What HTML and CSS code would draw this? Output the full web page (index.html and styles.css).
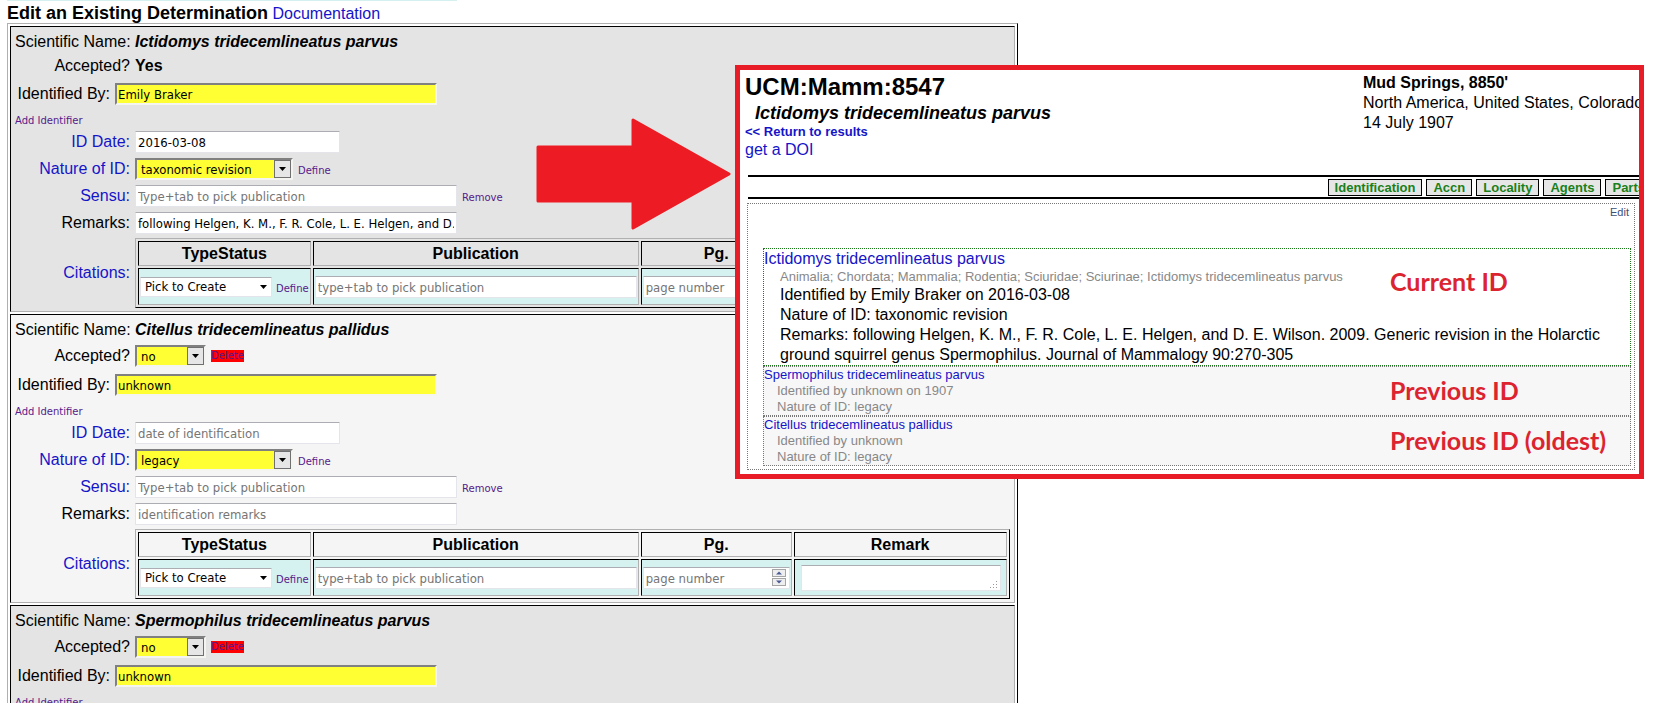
FILE: index.html
```html
<!DOCTYPE html>
<html lang="en">
<head>
<meta charset="utf-8">
<title>Edit an Existing Determination</title>
<link rel="stylesheet" href="styles.css">
</head>
<body>
<main class="editor">
  <div class="strip"></div>
  <header class="heading"><h1>Edit an Existing Determination</h1> <a href="#">Documentation</a></header>
  <div class="sheet">
    <section class="det det-dark">
      <div class="row row-name"><span class="lab">Scientific Name:</span><b><i>Ictidomys tridecemlineatus parvus</i></b></div>
      <div class="row row-acc"><span class="lab">Accepted?</span><b>Yes</b></div>
      <div class="row row-by"><label class="lab lab-by" for="by1">Identified By:</label><input class="box wide need" id="by1" value="Emily Braker"></div>
      <div class="row-add"><a class="small" href="#">Add Identifier</a></div>
      <div class="row"><label class="lab link" for="date1">ID Date:</label><input class="box mid" id="date1" value="2016-03-08"></div>
      <div class="row"><label class="lab link" for="nat1">Nature of ID:</label><span class="pick pick-nature"><select class="box need" id="nat1"><option>taxonomic revision</option></select><svg class="drop" viewBox="0 0 17 18"><rect class="btn" x=".5" y=".5" width="16" height="17"/><path d="M5 7h7l-3.500 4z"/></svg></span><a class="small" href="#">Define</a></div>
      <div class="row"><label class="lab link" for="sen1">Sensu:</label><input class="box wide" id="sen1" placeholder="Type+tab to pick publication"><a class="small" href="#">Remove</a></div>
      <div class="row"><label class="lab" for="rem1">Remarks:</label><input class="box wide" id="rem1" value="following Helgen, K. M., F. R. Cole, L. E. Helgen, and D."></div>
      <div class="row row-cite"><span class="lab link">Citations:</span>
        <table class="cites">
          <thead><tr><th>TypeStatus</th><th>Publication</th><th>Pg.</th><th>Remark</th></tr></thead>
          <tbody><tr>
            <td><div class="cell"><span class="pick pick-type"><select class="box" aria-label="Type status"><option>Pick to Create</option></select><svg class="drop plain" viewBox="0 0 17 18"><path d="M5 7h7l-3.500 4z"/></svg></span><a class="small" href="#">Define</a></div></td>
            <td><input class="box pub" aria-label="Publication" placeholder="type+tab to pick publication"></td>
            <td><input class="box page" aria-label="Page" placeholder="page number"></td>
            <td><textarea class="box note" aria-label="Remark"></textarea></td>
          </tr></tbody>
        </table>
      </div>
    </section>

    <section class="det det-light">
      <div class="row row-name"><span class="lab">Scientific Name:</span><b><i>Citellus tridecemlineatus pallidus</i></b></div>
      <div class="row row-acc row-choose"><label class="lab" for="acc2">Accepted?</label><span class="pick pick-acc"><select class="box need" id="acc2"><option>no</option></select><svg class="drop" viewBox="0 0 17 18"><rect class="btn" x=".5" y=".5" width="16" height="17"/><path d="M5 7h7l-3.500 4z"/></svg></span><a class="small delete" href="#">Delete</a></div>
      <div class="row row-by"><label class="lab lab-by" for="by2">Identified By:</label><input class="box wide need" id="by2" value="unknown"></div>
      <div class="row-add"><a class="small" href="#">Add Identifier</a></div>
      <div class="row"><label class="lab link" for="date2">ID Date:</label><input class="box mid" id="date2" placeholder="date of identification"></div>
      <div class="row"><label class="lab link" for="nat2">Nature of ID:</label><span class="pick pick-nature"><select class="box need" id="nat2"><option>legacy</option></select><svg class="drop" viewBox="0 0 17 18"><rect class="btn" x=".5" y=".5" width="16" height="17"/><path d="M5 7h7l-3.500 4z"/></svg></span><a class="small" href="#">Define</a></div>
      <div class="row"><label class="lab link" for="sen2">Sensu:</label><input class="box wide" id="sen2" placeholder="Type+tab to pick publication"><a class="small" href="#">Remove</a></div>
      <div class="row"><label class="lab" for="rem2">Remarks:</label><input class="box wide" id="rem2" placeholder="identification remarks"></div>
      <div class="row row-cite"><span class="lab link">Citations:</span>
        <table class="cites">
          <thead><tr><th>TypeStatus</th><th>Publication</th><th>Pg.</th><th>Remark</th></tr></thead>
          <tbody><tr>
            <td><div class="cell"><span class="pick pick-type"><select class="box" aria-label="Type status"><option>Pick to Create</option></select><svg class="drop plain" viewBox="0 0 17 18"><path d="M5 7h7l-3.500 4z"/></svg></span><a class="small" href="#">Define</a></div></td>
            <td><input class="box pub" aria-label="Publication" placeholder="type+tab to pick publication"></td>
            <td><span class="pick"><input class="box page" aria-label="Page" placeholder="page number"><svg class="spin" viewBox="0 0 14 17"><rect class="half" x=".5" y=".5" width="13" height="7"/><rect class="half" x=".5" y="9.500" width="13" height="7"/><path d="M4 5.500h6L7 2.500zM4 11.500h6l-3 3z"/></svg></span></td>
            <td><span class="pick"><textarea class="box note" aria-label="Remark"></textarea><svg class="grip" viewBox="0 0 8 8"><path d="M6 0h1v1H6zM6 3h1v1H6zM3 3h1v1H3zM6 6h1v1H6zM3 6h1v1H3zM0 6h1v1H0z"/></svg></span></td>
          </tr></tbody>
        </table>
      </div>
    </section>

    <section class="det det-dark det-last">
      <div class="row row-name"><span class="lab">Scientific Name:</span><b><i>Spermophilus tridecemlineatus parvus</i></b></div>
      <div class="row row-acc row-choose"><label class="lab" for="acc3">Accepted?</label><span class="pick pick-acc"><select class="box need" id="acc3"><option>no</option></select><svg class="drop" viewBox="0 0 17 18"><rect class="btn" x=".5" y=".5" width="16" height="17"/><path d="M5 7h7l-3.500 4z"/></svg></span><a class="small delete" href="#">Delete</a></div>
      <div class="row row-by"><label class="lab lab-by" for="by3">Identified By:</label><input class="box wide need" id="by3" value="unknown"></div>
      <div class="row-add"><a class="small" href="#">Add Identifier</a></div>
    </section>
  </div>
</main>

<svg class="arrow" viewBox="0 0 198 112" aria-hidden="true"><path d="M3 29H98V2L194 56L98 110V83H3Z"/></svg>

<aside class="popup">
  <header class="specimen">
    <div class="ident">
      <h2>UCM:Mamm:8547</h2>
      <p class="taxon">Ictidomys tridecemlineatus parvus</p>
      <a class="back" href="#">&lt;&lt; Return to results</a>
      <a class="doi" href="#">get a DOI</a>
    </div>
    <div class="place"><b>Mud Springs, 8850'</b><br>North America, United States, Colorado<br>14 July 1907</div>
  </header>
  <nav class="tabs"><button>Identification</button><button>Accn</button><button>Locality</button><button>Agents</button><button>Parts</button></nav>
  <div class="history">
    <a class="edit" href="#">Edit</a>
    <article class="rec current">
      <a href="#">Ictidomys tridecemlineatus parvus</a>
      <div class="info"><p class="ranks">Animalia; Chordata; Mammalia; Rodentia; Sciuridae; Sciurinae; Ictidomys tridecemlineatus parvus</p>
      <p>Identified by Emily Braker on 2016-03-08</p>
      <p>Nature of ID: taxonomic revision</p>
      <p>Remarks: following Helgen, K. M., F. R. Cole, L. E. Helgen, and D. E. Wilson. 2009. Generic revision in the Holarctic ground squirrel genus Spermophilus. Journal of Mammalogy 90:270-305</p></div>
      <strong class="tag tag-current">Current ID</strong>
    </article>
    <article class="rec old">
      <a href="#">Spermophilus tridecemlineatus parvus</a>
      <div class="info"><p>Identified by unknown on 1907</p><p>Nature of ID: legacy</p></div>
      <strong class="tag">Previous ID</strong>
    </article>
    <article class="rec old">
      <a href="#">Citellus tridecemlineatus pallidus</a>
      <div class="info"><p>Identified by unknown</p><p>Nature of ID: legacy</p></div>
      <strong class="tag">Previous ID (oldest)</strong>
    </article>
  </div>
</aside>
</body>
</html>
```
FILE: styles.css
```css
* { box-sizing: border-box; }
body {
  position: relative;
  height: 100vh;
  margin: 0;
  overflow: hidden;
  background: #fff;
  color: #000;
  font: 16px/20px "Liberation Sans", Arial, sans-serif;
}
h1, h2, p { margin: 0; }
a, .link { color: #1414c8; text-decoration: none; }

.editor { width: max-content; height: 100vh; overflow: hidden; padding-left: 7px; }
.strip { width: 450px; height: 1px; background: #d4f1f0; }
.heading { height: 22px; padding-top: 2px; }
.heading h1 { display: inline; font-size: 18px; }
.sheet {
  display: flex;
  flex-direction: column;
  gap: 2px;
  padding: 2px;
  border: 1px solid #b0b0b0;
  border-right-color: #000;
}

.det {
  padding: 2px 4px 0;
  border: 1px solid #000;
  border-right-color: #b0b0b0;
  border-bottom-color: #b0b0b0;
}
.det-dark { background: #e4e4e4; }
.det-light { background: #f5f5f5; }
.det-last { padding-bottom: 160px; }

.row { display: flex; align-items: center; height: 27px; }
.row-name { height: 26px; }
.row-acc { height: 24px; padding-bottom: 2px; }
.row-choose { height: 27px; }
.row-by { height: 29px; }
.row-add { height: 20px; padding-top: 1px; }
.row-cite { height: auto; padding: 2px 0 3px; }
.lab { width: 115px; margin-right: 5px; text-align: right; white-space: nowrap; }
.lab-by { width: 95px; }
.small {
  margin-left: 5px;
  padding-top: 4px;
  color: #551a8b;
  font: 10px/12px "DejaVu Sans", Verdana, sans-serif;
}
.row-add .small { margin-left: 0; }
.delete { padding: 0; background: #f00; }

.box {
  height: 22px;
  margin: 0;
  padding: 1px 2px 0;
  border: 1px solid #e3e5ea;
  border-top-color: #abadb3;
  border-radius: 1px;
  outline: 0;
  background: #fff;
  color: #000;
  font: 13px/18px "DejaVu Sans Condensed", Tahoma, sans-serif;
  appearance: none;
}
.box::placeholder { color: #757575; opacity: 1; }
.wide { width: 322px; }
.mid { width: 205px; }
.need { border: 2px solid #f4f4f0; border-top-color: #808080; border-left-color: #808080; border-radius: 0; background: #ff3; padding-left: 1px; }
.pick { position: relative; display: block; }
.pick select { display: block; width: 100%; padding-left: 4px; }
.pick-nature { width: 158px; }
.pick-acc { width: 71px; }
.pick-type { width: 132px; }
.pick-type .box { height: 20px; padding-top: 0; }
.drop { position: absolute; top: 2px; right: 2px; width: 17px; height: 18px; pointer-events: none; }
.plain { top: 1px; right: 0; }
.btn { fill: #e6e6e6; stroke: #707070; }

.cites { border: 1px solid #b0b0b0; border-right-color: #000; border-bottom-color: #000; border-spacing: 2px; }
.cites th, .cites td { padding: 1px; border: 1px solid #000; border-right-color: #b0b0b0; border-bottom-color: #b0b0b0; }
.cites th { height: 24px; padding-top: 2px; }
.cites td { height: 37px; background: #d6f2f0; }
.cell { display: flex; align-items: center; }
.cell .small { margin-left: 4px; }
.cites .box { vertical-align: middle; }
.pub { width: 322px; }
.page { width: 147px; }
.note { display: block; width: 200px; height: 26px; margin: 0 4px 0 5px; resize: none; overflow: hidden; }
.spin { position: absolute; top: 2px; right: 4px; width: 14px; height: 17px; fill: #4a5a96; }
.half { fill: #eee; stroke: #a5a5a5; }
.grip { position: absolute; right: 7px; bottom: 2px; width: 8px; height: 8px; fill: #999; }

.arrow { position: absolute; left: 535px; top: 118px; width: 198px; height: 112px; fill: #ed1c24; stroke: #ed1c24; stroke-width: 3px; stroke-linejoin: round; }

.popup {
  position: absolute;
  left: 735px;
  right: 35px;
  top: 65px;
  padding: 2px 0 4px;
  overflow: hidden;
  border: 5px solid #e81c26;
  background: #fff;
}
.specimen { display: flex; height: 103px; padding-left: 5px; }
.ident { display: flex; flex-direction: column; flex: 1; }
.ident h2 { font-size: 24px; line-height: 30px; }
.taxon { padding-left: 10px; font: italic bold 18px/22px "Liberation Sans", Arial, sans-serif; }
.back { font-weight: bold; font-size: 13px; line-height: 16px; }
.place { flex: none; width: 276px; padding-top: 1px; white-space: nowrap; }
.tabs {
  display: flex;
  justify-content: flex-end;
  gap: 4px;
  height: 24px;
  margin: 0 -13px 0 8px;
  padding: 2px 0;
  border: solid #000;
  border-width: 2px 0;
}
.tabs button {
  height: 17px;
  padding: 0 6px;
  border: 1px solid #000;
  background: #e6e6e6;
  color: #1a801a;
  font: bold 13px/15px "Liberation Sans", Arial, sans-serif;
}
.history { margin: 4px 4px 0 7px; padding: 0 3px 3px 15px; border: 1px dotted #777; }
.edit { display: block; height: 44px; padding: 0 2px; color: #3c5078; font-size: 11px; line-height: 17px; text-align: right; }
.rec { position: relative; border: 1px dotted #777; }
.current { border-color: #1a7a1a; }
.current .info { padding: 0 8px 0 16px; }
.info .ranks { color: #888; font-size: 13px; line-height: 16px; }
.old { height: 50px; background: #f7f7f7; font-size: 13px; line-height: 16px; }
.old .info { padding-left: 13px; color: #888; }
.old a { display: block; }
.tag { position: absolute; left: 626px; top: 8px; color: #dc2430; font: bold 25px/30px Lato, sans-serif; white-space: nowrap; }
.tag-current { top: 17px; }
```
